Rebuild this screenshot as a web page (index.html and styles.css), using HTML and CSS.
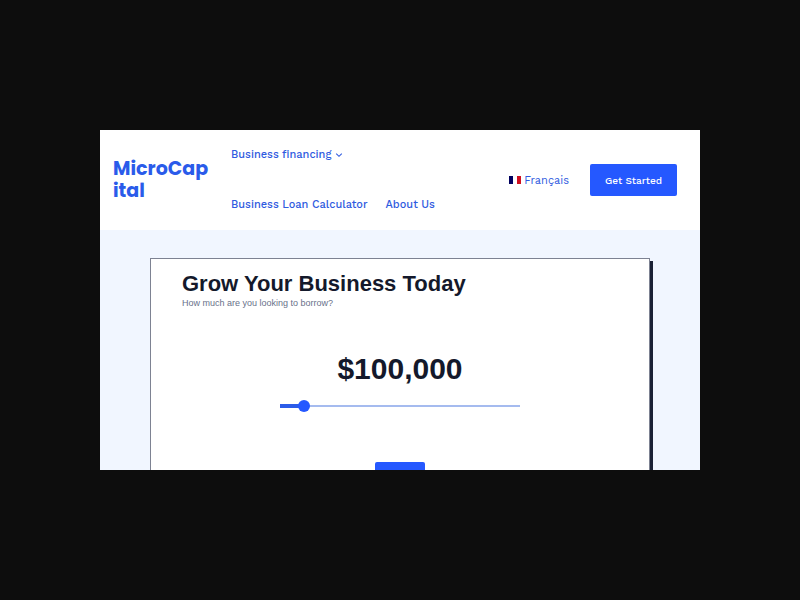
FILE: index.html
```html
<!DOCTYPE html>
<html lang="en">
<head>
<meta charset="utf-8">
<meta name="viewport" content="width=device-width, initial-scale=1">
<title>MicroCapital</title>
<link rel="stylesheet" href="styles.css">
</head>
<body>
<div class="frame">
  <header class="header">
    <a class="logo" href="#">MicroCapital</a>
    <nav class="nav">
      <a class="nav-link" href="#">Business financing
        <svg class="chevron" viewBox="0 0 8 8" width="8" height="8" aria-hidden="true"><path d="M1.2 2.6 4 5.3l2.8-2.7" fill="none" stroke="currentColor" stroke-width="1.1"/></svg>
      </a>
      <a class="nav-link" href="#">Business Loan Calculator</a>
      <a class="nav-link" href="#">About Us</a>
    </nav>
    <a class="language" href="#" lang="fr">
      <svg class="flag" viewBox="0 0 12 8" width="12" height="8" aria-hidden="true"><path fill="#fff" d="M0 0h12v8H0z"/><path fill="#00005f" d="M0 0h4v8H0z"/><path fill="#d01020" d="M8 0h4v8H8z"/></svg>
      Français
    </a>
    <button class="get-started" type="button">Get Started</button>
  </header>
  <main class="main">
    <section class="card">
      <h1 class="title">Grow Your Business Today</h1>
      <label class="subtitle" for="amount">How much are you looking to borrow?</label>
      <output class="amount" for="amount">$100,000</output>
      <input class="slider" id="amount" type="range" min="0" max="1000000" step="10000" value="80000">
      <button class="next" type="button" aria-label="Next"></button>
    </section>
  </main>
</div>
</body>
</html>
```
FILE: styles.css
```css
* { box-sizing: border-box; }

body {
  margin: 0;
  min-height: 100vh;
  display: flex;
  align-items: center;
  justify-content: center;
  background: #0d0d0d;
  color: #14192b;
  font-family: "Liberation Sans", Arial, sans-serif;
}

.frame {
  width: 75%;
  aspect-ratio: 30 / 17;
  overflow: hidden;
  background: #f1f6ff;
}

.header {
  display: flex;
  align-items: center;
  padding: 0 23px 0 13px;
  background: #fff;
  font-family: "Work Sans", Inter, sans-serif;
}

a {
  color: #2f5be0;
  text-decoration: none;
}

.logo {
  flex: 0 0 98px;
  margin-right: 20px;
  color: #2a5bea;
  font: 700 19px/22px Poppins, Inter, sans-serif;
  word-break: break-all;
}

.nav {
  display: flex;
  flex: 0 1 240px;
  flex-wrap: wrap;
  column-gap: 18px;
}

.nav-link {
  display: flex;
  align-items: center;
  gap: 4px;
  font-size: 11px;
  font-weight: 500;
  line-height: 50px;
  white-space: nowrap;
}

.language {
  display: flex;
  align-items: center;
  gap: 3px;
  margin: 0 21px 0 auto;
  font-size: 11px;
}

.get-started {
  width: 87px;
  height: 32px;
  padding: 0;
  border: 0;
  border-radius: 2px;
  background: #2558ff;
  color: #fff;
  font: 500 10px "Work Sans", Inter, sans-serif;
}

.main { padding: 28px 50px; }

.card {
  display: flex;
  flex-direction: column;
  padding: 12px 31px 32px;
  border: 1px solid #7d8292;
  background: #fff;
  box-shadow: 3px 3px 0 #1b2135;
}

.title {
  margin: 0;
  font-size: 22px;
  line-height: 26px;
}

.subtitle {
  color: #69718a;
  font-size: 9px;
  line-height: 12px;
}

.amount {
  margin-top: 42px;
  font-size: 30px;
  font-weight: 700;
  line-height: 36px;
  text-align: center;
}

.slider {
  appearance: none;
  align-self: center;
  width: 240px;
  height: 12px;
  margin: 13px 0 50px;
  border-radius: 2px;
  background:
    linear-gradient(#2c5ce8, #2c5ce8) left / 10% 4px no-repeat,
    linear-gradient(#a5bbef, #a5bbef) center / 100% 2px no-repeat;
}

.slider::-webkit-slider-thumb {
  appearance: none;
  width: 12px;
  height: 12px;
  border-radius: 50%;
  background: #2558ff;
}

.next {
  align-self: center;
  width: 50px;
  height: 24px;
  border: 0;
  border-radius: 2px;
  background: #2558ff;
}
```
